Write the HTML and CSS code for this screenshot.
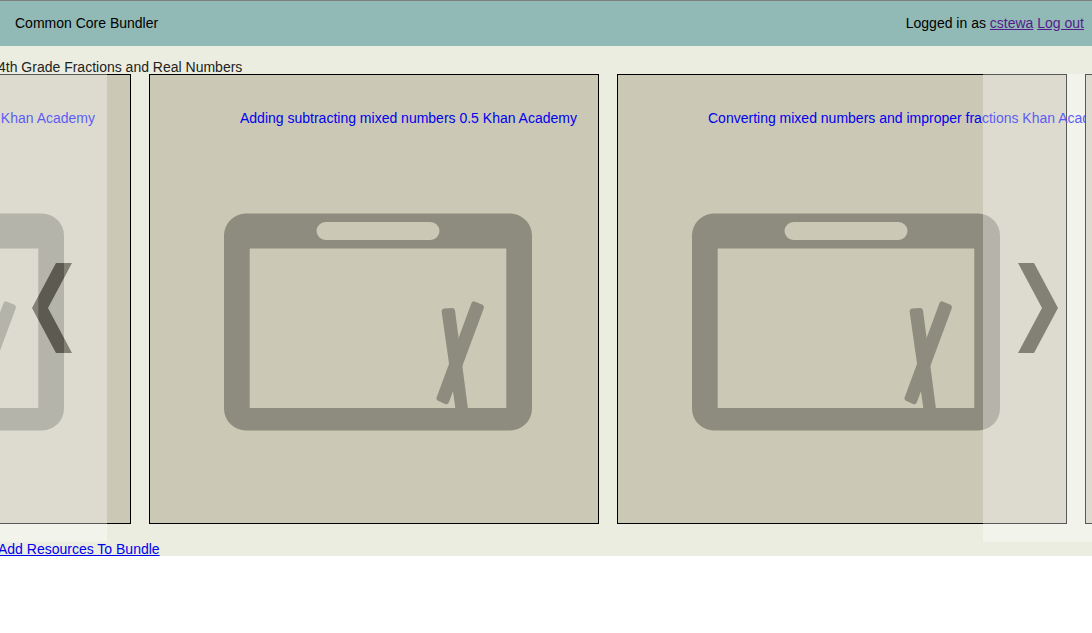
FILE: index.html
```html
<!DOCTYPE html>
<html lang="en">
<head>
<meta charset="utf-8">
<title>Common Core Bundler</title>
<link rel="stylesheet" href="styles.css">
</head>
<body>
<svg class="defs" aria-hidden="true">
  <symbol id="board" viewBox="0 0 308 218">
    <path fill-rule="evenodd" d="M22 .5H286A22 22 0 0 1 308 22.500V195.500A22 22 0 0 1 286 217.500H22A22 22 0 0 1 0 195.500V22.500A22 22 0 0 1 22 .5ZM101.500 9A9 9 0 0 0 101.500 27H206.500A9 9 0 0 0 206.500 9ZM25.700 35.500V195H282.300V35.500Z"/>
    <path d="M220 95.500L228.500 95Q230.700 95 231 97.500L244 196H231.500L217.600 98.500Q217.500 96 220 95.500Z"/>
    <path d="M250.500 88.500L258 91.500Q260.700 93 259.700 95.500L225 189Q224 192 221 191L214.500 188Q211.700 186.800 212.600 184.500L247.500 90Q248.500 87.800 250.500 88.500Z"/>
  </symbol>
</svg>
<header class="topbar">
  <span>Common Core Bundler</span>
  <nav>Logged in as <a href="#user">cstewa</a> <a href="#logout">Log out</a></nav>
</header>
<main class="bundle">
  <h1 class="bundle-title">4th Grade Fractions and Real Numbers</h1>
  <section class="carousel" aria-label="Resources">
    <div class="track">
      <article class="card card-leading">
        <a class="card-title" href="#r1">Khan Academy</a>
        <svg class="board"><use href="#board"/></svg>
      </article>
      <article class="card">
        <a class="card-title" href="#r2">Adding subtracting mixed numbers 0.5 Khan Academy</a>
        <svg class="board"><use href="#board"/></svg>
      </article>
      <article class="card">
        <a class="card-title" href="#r3">Converting mixed numbers and improper fractions Khan Academy</a>
        <svg class="board"><use href="#board"/></svg>
      </article>
      <article class="card">
        <svg class="board"><use href="#board"/></svg>
      </article>
    </div>
    <button class="arrow arrow-prev" type="button" aria-label="Previous">
      <svg width="40" height="90" viewBox="0 0 40 90"><path d="M24 0H40L16 45L40 90H24L0 45Z"/></svg>
    </button>
    <button class="arrow arrow-next" type="button" aria-label="Next">
      <svg width="40" height="90" viewBox="0 0 40 90"><path d="M0 0H16L40 45L16 90H0L24 45Z"/></svg>
    </button>
  </section>
  <a class="add-link" href="#add">Add Resources To Bundle</a>
</main>
</body>
</html>
```
FILE: styles.css
```css
* {
  box-sizing: border-box;
}

body {
  margin: 0;
  background: #fff;
  color: #000;
  font: 14px/16px "Liberation Sans", Arial, sans-serif;
}

.defs {
  position: absolute;
  width: 0;
  height: 0;
}

.topbar {
  display: flex;
  justify-content: space-between;
  padding: 14px 8px 15px 15px;
  border-top: 1px solid #7e7e7e;
  background: #91bab6;
}

.topbar a {
  color: #551a8b;
}

.bundle {
  overflow: hidden;
  padding-top: 14px;
  background: #ebede0;
}

.bundle-title {
  margin: 0 0 0 -2px;
  color: #222;
  font-size: 14px;
  font-weight: normal;
  line-height: 14px;
}

.carousel {
  position: relative;
  overflow: hidden;
}

.track {
  display: flex;
  gap: 18px;
  margin-left: -319px;
  padding-bottom: 18px;
}

.card {
  display: flex;
  flex: none;
  flex-direction: column;
  position: relative;
  width: 450px;
  height: 450px;
  padding: 35px 0 0 74px;
  border: 1px solid #000;
  background: #cbc8b5;
}

.card-title {
  margin-left: 16px;
  color: #00e;
  text-decoration: none;
  white-space: nowrap;
}

.card-leading .card-title {
  align-self: flex-end;
  margin-right: 35px;
}

.board {
  width: 308px;
  height: 218px;
  margin-top: 87px;
  fill: #8e8c7e;
}

.card:last-child .board {
  margin-top: 103px;
}

.arrow {
  display: flex;
  align-items: center;
  position: absolute;
  top: 0;
  bottom: 0;
  padding: 0;
  border: 0;
  background: #fff;
  opacity: 0.35;
}

.arrow-prev {
  left: 0;
  width: 107px;
  padding-left: 32px;
}

.arrow-next {
  right: 0;
  width: 109px;
  padding-left: 35px;
}

.add-link {
  display: block;
  width: fit-content;
  margin-left: -2px;
  color: #00e;
  line-height: 14px;
}
```
